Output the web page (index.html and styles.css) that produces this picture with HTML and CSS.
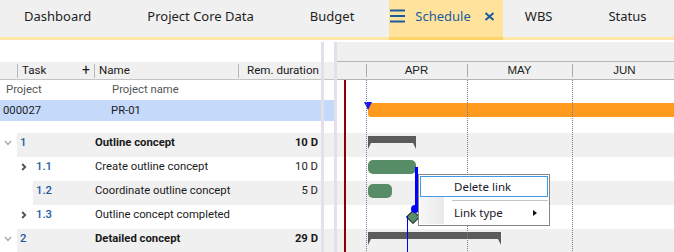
FILE: index.html
```html
<!DOCTYPE html>
<html lang="en">
<head>
    <meta charset="UTF-8">
    <title>Schedule</title>
    <link rel="stylesheet" href="styles.css">
</head>
<body>
    <!-- Tab bar -->
    <div class="tabs">
        <div class="tab tab-first">Dashboard</div>
        <div class="tab">Project Core Data</div>
        <div class="tab">Budget</div>
        <div class="tab tab-active">
            <svg class="menu-icon" width="15" height="14" viewBox="0 0 15 14"><path d="M0 1.5h15M0 7h15M0 12.5h15" stroke="#1b5aa0" stroke-width="2"/></svg>
            <span>Schedule</span>
            <svg class="close-icon" width="11" height="9" viewBox="0 0 11 9"><path d="M1.5 1l8 7M9.5 1l-8 7" stroke="#1b5aa0" stroke-width="2"/></svg>
        </div>
        <div class="tab">WBS</div>
        <div class="tab">Status</div>
    </div>

    <div class="main">
        <!-- Task grid -->
        <div class="grid-pane">
            <div class="grid-top"></div>
            <div class="grid-head">
                <span class="head-blank"></span>
                <span class="head-task">Task <b>+</b></span>
                <span class="head-name">Name</span>
                <span class="head-dur">Rem. duration</span>
            </div>
            <div class="proj-labels">
                <span class="cell-proj">Project</span>
                <span class="cell-pname">Project name</span>
            </div>
            <div class="proj-row">
                <span class="cell-proj">000027</span>
                <span class="cell-pname">PR-01</span>
            </div>
            <div class="gap"></div>

            <div class="row l1 band">
                <div class="cell-num"><span class="chev down"><svg width="8" height="6" viewBox="0 0 8 6"><path d="M1 1l3 3.5L7 1" fill="none" stroke="#a8a8a8" stroke-width="1.3"/></svg></span><b>1</b></div>
                <div class="cell-name bold">Outline concept</div>
                <div class="cell-dur bold">10 D</div>
            </div>
            <div class="row l2">
                <div class="cell-num"><span class="chev"><svg width="6" height="8" viewBox="0 0 6 8"><path d="M1.2 1l3 3-3 3" fill="none" stroke="#505050" stroke-width="1.8"/></svg></span><b>1.1</b></div>
                <div class="cell-name">Create outline concept</div>
                <div class="cell-dur">10 D</div>
            </div>
            <div class="row l2 band">
                <div class="cell-num"><span class="chev"></span><b>1.2</b></div>
                <div class="cell-name">Coordinate outline concept</div>
                <div class="cell-dur">5 D</div>
            </div>
            <div class="row l2">
                <div class="cell-num"><span class="chev"><svg width="6" height="8" viewBox="0 0 6 8"><path d="M1.2 1l3 3-3 3" fill="none" stroke="#505050" stroke-width="1.8"/></svg></span><b>1.3</b></div>
                <div class="cell-name">Outline concept completed</div>
                <div class="cell-dur"></div>
            </div>
            <div class="row l1 band">
                <div class="cell-num"><span class="chev down"><svg width="8" height="6" viewBox="0 0 8 6"><path d="M1 1l3 3.5L7 1" fill="none" stroke="#a8a8a8" stroke-width="1.3"/></svg></span><b>2</b></div>
                <div class="cell-name bold">Detailed concept</div>
                <div class="cell-dur bold">29 D</div>
            </div>

            <div class="vline"></div>
        </div>

        <div class="splitter"></div>

        <!-- Gantt chart -->
        <div class="gantt">
            <div class="gantt-top"></div>
            <div class="gantt-head">
                <div class="month" style="width: 29px"></div>
                <div class="month" style="width: 101px">APR</div>
                <div class="month" style="width: 105px">MAY</div>
                <div class="month" style="width: 105px">JUN</div>
            </div>
            <div class="gantt-body">
                <div class="g-labels"></div>
                <div class="g-proj">
                    <div class="bar-project" style="left: 31px"></div>
                    <div class="start-marker" style="left: 27px"></div>
                </div>
                <div class="gap"></div>
                <div class="g-row band">
                    <svg class="bar-summary" style="left: 31px" width="48" height="13" viewBox="0 0 48 13"><path d="M0 0H48V13L45 7H3L0 13Z" fill="#5b5b5b"/></svg>
                </div>
                <div class="g-row">
                    <div class="bar-task" style="left: 31px; width: 48px"></div>
                </div>
                <div class="g-row band">
                    <div class="bar-task" style="left: 31px; width: 24px"></div>
                </div>
                <div class="g-row">
                    <div class="milestone" style="left: 71px"></div>
                </div>
                <div class="g-row band">
                    <svg class="bar-summary" style="left: 31px" width="133" height="13" viewBox="0 0 133 13"><path d="M0 0H133V13L130 7H3L0 13Z" fill="#5b5b5b"/></svg>
                </div>

                <div class="today" style="left: 7px"></div>
                <div class="month-line" style="left: 29px"></div>
                <div class="month-line" style="left: 130px"></div>
                <div class="month-line" style="left: 235px"></div>

                <div class="link-thick"></div>
                <div class="link-dot"></div>
                <div class="link-thin"></div>

                <div class="context-menu">
                    <div class="menu-item selected">Delete link</div>
                    <div class="menu-lower">
                        <div class="menu-sep"></div>
                        <div class="menu-item">Link type <span class="submenu-arrow"></span></div>
                    </div>
                </div>
            </div>
        </div>
    </div>
</body>
</html>
```

FILE: styles.css
```css
/* General */
body {
    margin: 0;
    width: 674px;
    height: 252px;
    overflow: hidden;
    background: white;
    font-family: Roboto, "Liberation Sans", sans-serif;
    color: #1a1a1a;
}

/* Tab bar */
.tabs {
    display: flex;
    height: 37px;
    background: #f0f0f0;
    border-bottom: 3px solid #fde6a6;
    font-family: "Noto Sans", "Open Sans", sans-serif;
    font-size: 13px;
    color: #1e1e1e;
}

.tab {
    padding: 7px 28px 0;
    white-space: nowrap;
}

.tab-first {
    padding-left: 24px;
}

.tab-active {
    display: flex;
    align-items: flex-start;
    margin: 0 -6px 0 7px;
    padding: 7px 8px 0 1px;
    height: 30px;
    background: #ffe39c;
    box-shadow: 0 3px 0 #fdd46a;
    color: #1b5aa0;
}

.menu-icon {
    margin-top: 2px;
    margin-right: 10px;
}

.close-icon {
    margin-top: 5px;
    margin-left: 13px;
}

/* Layout */
.main {
    display: flex;
    height: 212px;
}

.grid-pane {
    position: relative;
    width: 334px;
    flex: none;
    font-size: 11.3px;
}

.splitter {
    width: 3px;
    flex: none;
    margin-top: 2px;
    background: #e4dfe8;
}

.vline {
    position: absolute;
    left: 321px;
    top: 2px;
    bottom: 0;
    width: 3px;
    background: #e4dfe8;
}

/* Grid header */
.grid-top {
    height: 22px;
}

.grid-head {
    display: flex;
    height: 17px;
    line-height: 17px;
    background: #f0f0f0;
    border-bottom: 1px solid #c4c4c4;
    font-size: 11.6px;
}

.grid-head > span {
    position: relative;
}

.head-blank {
    width: 17px;
}

.head-task {
    display: flex;
    justify-content: space-between;
    width: 68px;
    padding: 0 4px 0 5px;
}

.head-task b {
    font-weight: normal;
    font-size: 14px;
}

.head-name {
    width: 139px;
    padding-left: 5px;
}

.head-dur {
    padding-left: 9px;
    white-space: nowrap;
}

.head-task::before, .head-name::before, .head-dur::before {
    content: "";
    position: absolute;
    left: 0;
    top: 2px;
    bottom: 1px;
    border-left: 1px solid #b8b8b8;
}

/* Project rows */
.proj-labels, .proj-row {
    display: flex;
}

.proj-labels {
    height: 20px;
    line-height: 20px;
    color: #555;
}

.proj-row {
    height: 21px;
    line-height: 21px;
    background: #c5dafa;
}

.cell-proj {
    width: 106px;
    padding-left: 6px;
}

.proj-row .cell-proj {
    padding-left: 3px;
    width: 108px;
}

.gap {
    height: 12px;
}

/* Task rows */
.row {
    display: flex;
    height: 24px;
    line-height: 20px;
}

.row.band.l1 {
    background: linear-gradient(to right, transparent 17px, #f0f0f0 17px);
}

.row.band.l2 {
    background: linear-gradient(to right, transparent 33px, #f0f0f0 33px);
}

.cell-num {
    display: flex;
    width: 95px;
    color: #1d5aa0;
}

.cell-num b {
    font-weight: 500;
    padding-left: 3px;
}

.l1 .cell-num {
    padding-left: 3px;
    width: 92px;
}

.l2 .cell-num {
    padding-left: 19px;
    width: 76px;
}

.chev {
    display: flex;
    width: 14px;
    padding-top: 6px;
    box-sizing: border-box;
}

.chev.down {
    padding-left: 1px;
    padding-top: 7px;
}

.l2 .chev {
    padding-left: 2px;
}

.cell-name {
    flex: 1;
}

.cell-dur {
    width: 60px;
    padding-right: 16px;
    text-align: right;
}

.bold {
    font-weight: bold;
}

/* Gantt */
.gantt {
    flex: 1;
    padding-top: 2px;
    overflow: hidden;
    font-family: "Liberation Sans", Arial, sans-serif;
}

.gantt-top {
    height: 19px;
    background: #f0f0f0;
    border-bottom: 1px solid #b4b4b4;
}

.gantt-head {
    display: flex;
    height: 17px;
    line-height: 17px;
    background: #f0f0f0;
    border-bottom: 1px solid #b4b4b4;
    font-size: 11.5px;
    color: #222;
}

.month {
    position: relative;
    flex: none;
    text-align: center;
}

.month + .month::before {
    content: "";
    position: absolute;
    left: 0;
    top: 2px;
    bottom: 2px;
    border-left: 1px solid #aaa;
}

.gantt-body {
    position: relative;
    height: 173px;
}

.g-labels {
    height: 20px;
}

.g-proj {
    position: relative;
    height: 21px;
}

.g-row {
    position: relative;
    height: 24px;
}

.g-row.band {
    background: #f0f0f0;
}

.bar-project {
    position: absolute;
    top: 3px;
    right: -10px;
    height: 14px;
    background: #ff9a1e;
    border-radius: 0 0 0 3px;
}

.start-marker {
    position: absolute;
    top: 2px;
    width: 0;
    height: 0;
    border-left: 4.5px solid transparent;
    border-right: 4.5px solid transparent;
    border-top: 8px solid #1414e6;
}

.bar-summary {
    position: absolute;
    top: 3px;
}

.bar-task {
    position: absolute;
    top: 3px;
    height: 14px;
    background: #568d66;
    border-radius: 5px;
}

.milestone {
    position: absolute;
    top: 7px;
    width: 8px;
    height: 8px;
    background: #568d66;
    border: 1px solid #2d2d2d;
    transform: rotate(45deg);
}

.today {
    position: absolute;
    top: 0;
    bottom: 0;
    width: 2px;
    background: #8b0000;
}

.month-line {
    position: absolute;
    top: 0;
    bottom: 0;
    border-left: 1px dotted #7080a0;
}

/* Dependency link */
.link-thick {
    position: absolute;
    left: 78px;
    top: 87px;
    width: 3px;
    height: 42px;
    background: #0000ff;
}

.link-dot {
    position: absolute;
    left: 74px;
    top: 125px;
    width: 8px;
    height: 8px;
    border-radius: 50%;
    background: #0000ff;
}

.link-thin {
    position: absolute;
    left: 70px;
    top: 136px;
    bottom: 0;
    width: 1px;
    background: #0000ff;
}

/* Context menu */
.context-menu {
    position: absolute;
    left: 81px;
    top: 94px;
    width: 128px;
    padding: 1px;
    background: white;
    border: 1px solid #868686;
    font-family: "Noto Sans", "Open Sans", sans-serif;
    font-size: 11.5px;
    color: #1a1a2a;
}

.menu-item {
    position: relative;
    height: 21px;
    line-height: 20px;
    padding-left: 34px;
}

.menu-item.selected {
    height: 19px;
    padding-left: 33px;
    border: 1px solid #3d9be9;
}

.menu-lower {
    padding-top: 3px;
    background: linear-gradient(to right, #f7f7f7, #e9e9e9 24px, transparent 24px);
}

.menu-sep {
    height: 1px;
    margin-left: 32px;
    background: #c5c5c5;
}

.menu-lower .menu-item {
    height: 23px;
    line-height: 23px;
}

.submenu-arrow {
    position: absolute;
    right: 11px;
    top: 9px;
    border-top: 3px solid transparent;
    border-bottom: 3px solid transparent;
    border-left: 4px solid #111;
}
```
